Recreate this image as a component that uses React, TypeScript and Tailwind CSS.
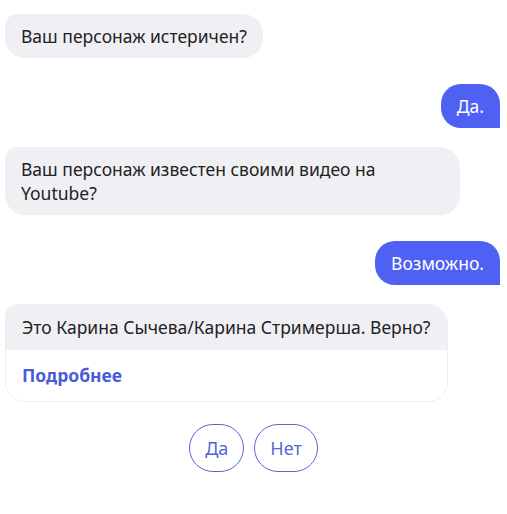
import React from 'react';

const font = { fontFamily: '"Noto Sans", "Open Sans", sans-serif' };

const BotBubble = ({ children, className = '' }: { children: React.ReactNode; className?: string }) => (
  <div className={`self-start max-w-[455px] bg-[#f0f0f4] text-[#222] rounded-[20px] rounded-tl-[12px] px-4 py-[10px] text-[17.5px] leading-6 ${className}`}>
    {children}
  </div>
);

const UserBubble = ({ children, className = '' }: { children: React.ReactNode; className?: string }) => (
  <div className={`self-end bg-[#4f61f3] text-white rounded-[20px] rounded-br-none px-4 py-[10px] text-[17.5px] leading-6 ${className}`}>
    {children}
  </div>
);

export default function App() {
  return (
    <div className="w-[507px] h-[514px] bg-white" style={font}>
      <div className="flex flex-col pl-[5px] pr-[7px] pt-[14px]">
        <BotBubble>Ваш персонаж истеричен?</BotBubble>
        <UserBubble className="mt-[26px]">Да.</UserBubble>
        <BotBubble className="mt-[19px] w-[455px]">
          Ваш персонаж известен своими видео на
          <br />
          Youtube?
        </BotBubble>
        <UserBubble className="mt-[26px]">Возможно.</UserBubble>

        {/* Guess card */}
        <div className="self-start mt-[19px] w-[443px] rounded-[20px] rounded-tl-[12px] border border-[#eeeef2] overflow-hidden">
          <div className="bg-[#f0f0f4] px-4 h-[45px] flex items-center text-[17.5px] text-[#222] whitespace-nowrap">
            Это Карина Сычева/Карина Стримерша. Верно?
          </div>
          <div className="bg-white px-4 h-[51px] flex items-center text-[17.5px] font-bold text-[#4a5cd6]">
            Подробнее
          </div>
        </div>

        <div className="mt-[22px] flex justify-center gap-[10px] pl-[2px]">
          <button className="h-[48px] px-[15px] rounded-full border border-[#5b64d4] text-[#5565d8] text-[18px]">Да</button>
          <button className="h-[48px] px-[15px] rounded-full border border-[#5b64d4] text-[#5565d8] text-[18px]">Нет</button>
        </div>
      </div>
    </div>
  );
}
